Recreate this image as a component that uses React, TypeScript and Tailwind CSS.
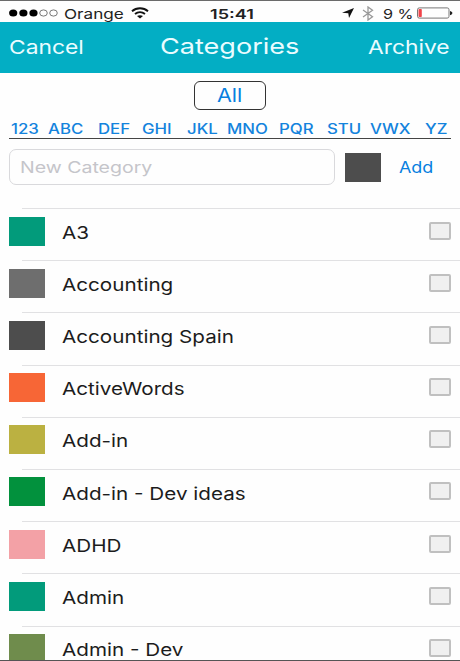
interface Category {
  name: string;
  color: string;
}

const categories: Category[] = [
  { name: 'A3', color: 'bg-[#029b7b]' },
  { name: 'Accounting', color: 'bg-[#6e6e6e]' },
  { name: 'Accounting Spain', color: 'bg-[#4d4d4d]' },
  { name: 'ActiveWords', color: 'bg-[#f76636]' },
  { name: 'Add-in', color: 'bg-[#bbb141]' },
  { name: 'Add-in - Dev ideas', color: 'bg-[#02913d]' },
  { name: 'ADHD', color: 'bg-[#f3a1a6]' },
  { name: 'Admin', color: 'bg-[#029b7b]' },
  { name: 'Admin - Dev', color: 'bg-[#6f8c4c]' },
];

const groups = [
  { label: '123', width: 'w-[37px]' },
  { label: 'ABC', width: 'w-[50px]' },
  { label: 'DEF', width: 'w-[44px]' },
  { label: 'GHI', width: 'w-[45px]' },
  { label: 'JKL', width: 'w-[40px]' },
  { label: 'MNO', width: 'w-[52px]' },
  { label: 'PQR', width: 'w-[48px]' },
  { label: 'STU', width: 'w-[43px]' },
  { label: 'VWX', width: 'w-[55px]' },
  { label: 'YZ', width: 'w-[24px]' },
];

function StatusBar() {
  return (
    <div className="flex h-[22px] shrink-0 items-center border-t border-[#6b6b6b] pl-[9px] pt-[3px] text-[#222]">
      <svg width="49" height="8" viewBox="0 0 49 8" className="shrink-0">
        <ellipse cx="4.2" cy="4" rx="4.1" ry="3.5" fill="#000" />
        <ellipse cx="14.4" cy="4" rx="4.1" ry="3.5" fill="#000" />
        <ellipse cx="24.5" cy="4" rx="4.1" ry="3.5" fill="#000" />
        <ellipse cx="34.5" cy="4" rx="3.8" ry="3.1" fill="none" stroke="#555" strokeWidth="0.8" />
        <ellipse cx="44.5" cy="4" rx="3.8" ry="3.1" fill="none" stroke="#555" strokeWidth="0.8" />
      </svg>
      <div className="-mt-px ml-[5.5px] w-[67.5px]">
        <span className="inline-block origin-left scale-x-[1.27] whitespace-nowrap text-[13.5px]">Orange</span>
      </div>
      <svg width="18" height="12" viewBox="0 0 18 12" className="shrink-0" fill="none" stroke="#111" strokeWidth="1.9">
        <path d="M1 4.2C5.5 0.2 12.5 0.2 17 4.2" />
        <path d="M4 7.1C6.9 4.7 11.1 4.7 14 7.1" />
        <path d="M9 11.5L6 9.1C7.7 7.9 10.3 7.9 12 9.1Z" fill="#111" stroke="none" />
      </svg>
      <div className="-mt-px ml-[61px] w-[132px]">
        <span className="inline-block origin-left scale-x-[1.34] whitespace-nowrap text-[13.5px] font-semibold">15:41</span>
      </div>
      <svg width="12" height="10" viewBox="0 0 12 10" className="shrink-0">
        <path d="M12 0L7 10L6.3 5.2L0 4.7Z" fill="#111" />
      </svg>
      <svg width="12" height="15" viewBox="0 0 12 15" className="ml-[8px] shrink-0" fill="none" stroke="#999" strokeWidth="1.3">
        <path d="M1 4L10.5 10.7L6 14V1L10.5 4.3L1 11" />
      </svg>
      <div className="-mt-px ml-[9px] w-[33px]">
        <span className="inline-block origin-left scale-x-[1.2] whitespace-nowrap text-[13.5px]">9 %</span>
      </div>
      <svg width="36" height="12" viewBox="0 0 36 12" className="ml-[1px] shrink-0">
        <rect x="0.5" y="0.9" width="31.5" height="10.2" rx="1.8" fill="none" stroke="#777" />
        <rect x="1.5" y="1.9" width="3.3" height="8.2" rx="0.8" fill="#f0444a" />
        <path d="M33 4V8.2C34.8 7.6 35.4 6.8 35.4 6C35.4 5.2 34.8 4.5 33 4Z" fill="#222" />
      </svg>
    </div>
  );
}

function NavBar() {
  return (
    <header className="flex h-[51px] shrink-0 items-center bg-[#03aec4] pl-[8.5px] text-[#eafcff]">
      <button className="w-[151.5px] pt-[2px] text-left">
        <span className="inline-block origin-left scale-x-[1.2] whitespace-nowrap text-[19px]">Cancel</span>
      </button>
      <h1 className="w-[208px] pb-[2px]">
        <span className="inline-block origin-left scale-x-[1.23] whitespace-nowrap text-[22px]">Categories</span>
      </h1>
      <button className="pt-[2px] text-left">
        <span className="inline-block origin-left scale-x-[1.2] whitespace-nowrap text-[19px]">Archive</span>
      </button>
    </header>
  );
}

function CategoryRow({ category }: { category: Category }) {
  return (
    <li className="relative flex h-[52.2px] shrink-0 items-start pl-[9px]">
      <div className="absolute left-[22px] right-0 top-0 h-px bg-[#e1e1e3]" />
      <div className={`mt-[8.5px] h-[29px] w-[36px] shrink-0 ${category.color}`} />
      <div className="ml-[17px] mt-[11.6px] flex-1 leading-[26px]">
        <span className="inline-block origin-left scale-x-[1.18] whitespace-nowrap text-[17.5px] text-[#1c1c1c]">
          {category.name}
        </span>
      </div>
      <div className="mr-[9px] mt-[13.5px] h-[18px] w-[22px] rounded-[2px] border-2 border-[#c0c0c0] bg-[#f0f0f0]" />
    </li>
  );
}

export default function App() {
  return (
    <div className="flex h-[661px] w-[460px] flex-col overflow-hidden border-b border-[#555] bg-[#fefefe] font-[Inter,'Liberation_Sans',sans-serif]">
      <StatusBar />
      <NavBar />

      {/* Filters */}
      <button className="mt-[8px] flex h-[29px] w-[72px] shrink-0 items-center justify-center self-center rounded-[6px] border-[1.3px] border-[#333] text-[#087fe0]">
        <span className="inline-block scale-x-[1.2] text-[18px]">All</span>
      </button>
      <nav className="mx-[9px] mt-[9px] flex h-[20px] shrink-0 items-center border-b border-[#444] pb-[2px] pl-[1.5px] text-[#1383dd]">
        {groups.map(group => (
          <button key={group.label} className={`shrink-0 text-left ${group.width}`}>
            <span className="inline-block origin-left scale-x-[1.2] whitespace-nowrap text-[14px] font-medium">{group.label}</span>
          </button>
        ))}
      </nav>

      {/* New category */}
      <div className="ml-[9px] mt-[10px] flex h-[36px] shrink-0 items-center">
        <div className="flex h-full w-[326px] items-center rounded-[7px] border border-[#d9d9dc] pl-[10px]">
          <span className="inline-block origin-left scale-x-[1.22] whitespace-nowrap text-[16px] text-[#c5c5ca]">New Category</span>
        </div>
        <div className="ml-[10px] h-[29px] w-[36px] bg-[#4d4d4d]" />
        <button className="ml-[18px] text-[#087fe0]">
          <span className="inline-block origin-left scale-x-[1.12] text-[16px]">Add</span>
        </button>
      </div>

      {/* List */}
      <ul className="mt-[23px] flex min-h-0 flex-1 flex-col overflow-hidden">
        {categories.map(category => (
          <CategoryRow key={category.name} category={category} />
        ))}
      </ul>
    </div>
  );
}
